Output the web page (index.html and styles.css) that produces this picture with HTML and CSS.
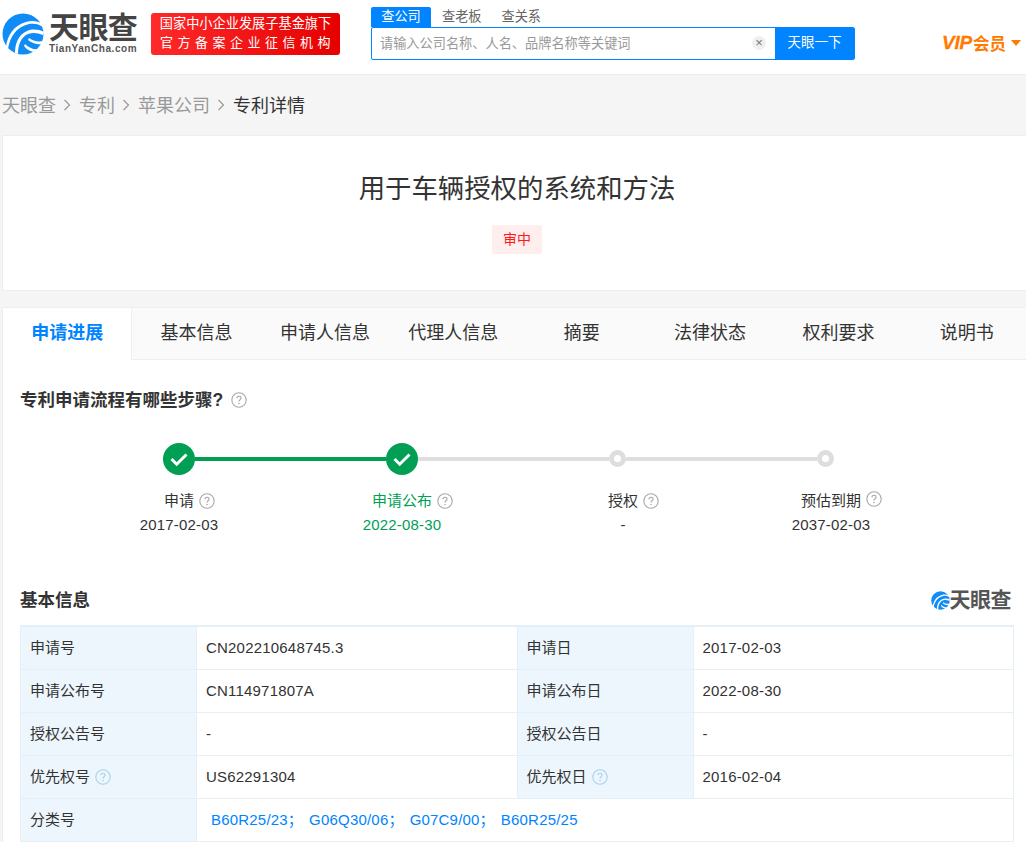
FILE: index.html
```html
<!DOCTYPE html>
<html lang="zh-CN">
<head>
<meta charset="utf-8">
<title>用于车辆授权的系统和方法</title>
<link rel="stylesheet" href="styles.css">
</head>
<body>
<svg class="defs" width="0" height="0" aria-hidden="true">
  <symbol id="tyc" viewBox="0 0 42 42">
    <circle cx="21" cy="21" r="20.5" fill="#0f8cf5"/>
    <path d="M6 36C8 24 14 14 27 11c5-1 10 0 14 3l1-2C37 8 30 7 24 9 12 12 5 23 4 34z" fill="#fff"/>
    <path d="M16 41c0-9 3-17 10-20 5-2 10-1 15 1l1-3c-6-3-12-3-17-1-9 4-12 13-12 22z" fill="#fff"/>
    <path d="M27 25c4 3 9 4 14 3l-1 3c-5 1-10-1-14-4z" fill="#fff"/>
    <path d="M23 31c4 4 9 6 14 5l-3 3c-5 0-9-2-12-6z" fill="#fff"/>
  </symbol>
  <symbol id="help" viewBox="0 0 16 16">
    <circle cx="8" cy="8" r="7.2" fill="none" stroke="currentColor" stroke-width="1.1"/>
    <path d="M5.9 6.3C5.9 5 6.9 4.2 8 4.2s2.1.8 2.1 1.9c0 1.6-2.1 1.7-2.1 3.4" fill="none" stroke="currentColor" stroke-width="1.1"/>
    <circle cx="8" cy="11.5" r=".8" fill="currentColor"/>
  </symbol>
  <symbol id="chev" viewBox="0 0 8 12">
    <path d="M1.5 1l5 5-5 5" fill="none" stroke="currentColor" stroke-width="1.2"/>
  </symbol>
  <symbol id="check" viewBox="0 0 32 32">
    <circle cx="16" cy="16" r="16" fill="#009f53"/>
    <path d="M8.5 16l5.2 5.2L23.5 11.5" fill="none" stroke="#fff" stroke-width="3"/>
  </symbol>
</svg>

<header class="topbar">
  <div class="brand">
    <svg class="brand-icon"><use href="#tyc"/></svg>
    <div class="brand-text">
      <div class="brand-name">天眼查</div>
      <div class="brand-url">TianYanCha.com</div>
    </div>
  </div>
  <div class="fund">
    <div class="fund-one">国家中小企业发展子基金旗下</div>
    <div class="fund-two">官方备案企业征信机构</div>
  </div>
  <div class="search">
    <div class="search-tabs">
      <span class="search-tab is-on">查公司</span>
      <span class="search-tab">查老板</span>
      <span class="search-tab">查关系</span>
    </div>
    <div class="search-box">
      <span class="placeholder">请输入公司名称、人名、品牌名称等关键词</span>
      <span class="clear">×</span>
      <span class="search-btn">天眼一下</span>
    </div>
  </div>
  <div class="vip"><span class="vip-v">VIP</span><span class="vip-c">会员</span><i class="caret"></i></div>
</header>

<nav class="crumbs">
  <a>天眼查</a><svg class="chev"><use href="#chev"/></svg>
  <a>专利</a><svg class="chev"><use href="#chev"/></svg>
  <a>苹果公司</a><svg class="chev"><use href="#chev"/></svg>
  <span class="crumb-now">专利详情</span>
</nav>

<section class="card title-card">
  <h1 class="title">用于车辆授权的系统和方法</h1>
  <span class="status">审中</span>
</section>

<section class="card main-card">
  <div class="tabs">
    <div class="tab is-on">申请进展</div>
    <div class="tab">基本信息</div>
    <div class="tab">申请人信息</div>
    <div class="tab">代理人信息</div>
    <div class="tab">摘要</div>
    <div class="tab">法律状态</div>
    <div class="tab">权利要求</div>
    <div class="tab">说明书</div>
  </div>
  <div class="content">
    <h2 class="flow-title">专利申请流程有哪些步骤?<svg class="help help-title"><use href="#help"/></svg></h2>
    <div class="track">
      <svg class="dot-done"><use href="#check"/></svg>
      <i class="line line-green"></i>
      <svg class="dot-done"><use href="#check"/></svg>
      <i class="line"></i>
      <i class="ring"></i>
      <i class="line"></i>
      <i class="ring"></i>
    </div>
    <div class="steps">
      <div class="step">
        <div class="step-label"><span class="step-name">申请<svg class="help help-step"><use href="#help"/></svg></span></div>
        <div class="step-date">2017-02-03</div>
      </div>
      <div class="step is-green">
        <div class="step-label"><span class="step-name">申请公布<svg class="help help-step"><use href="#help"/></svg></span></div>
        <div class="step-date">2022-08-30</div>
      </div>
      <div class="step">
        <div class="step-label"><span class="step-name">授权<svg class="help help-step"><use href="#help"/></svg></span></div>
        <div class="step-date">-</div>
      </div>
      <div class="step">
        <div class="step-label"><span class="step-name">预估到期<svg class="help help-step help-up"><use href="#help"/></svg></span></div>
        <div class="step-date">2037-02-03</div>
      </div>
    </div>
    <div class="info-head">
      <h2 class="info-title">基本信息</h2>
      <div class="mark"><svg class="mark-icon"><use href="#tyc"/></svg><span class="mark-name">天眼查</span></div>
    </div>
    <table class="info">
      <tr>
        <th>申请号</th><td>CN202210648745.3</td>
        <th>申请日</th><td>2017-02-03</td>
      </tr>
      <tr>
        <th>申请公布号</th><td>CN114971807A</td>
        <th>申请公布日</th><td>2022-08-30</td>
      </tr>
      <tr>
        <th>授权公告号</th><td>-</td>
        <th>授权公告日</th><td>-</td>
      </tr>
      <tr>
        <th>优先权号<svg class="help help-cell"><use href="#help"/></svg></th><td>US62291304</td>
        <th>优先权日<svg class="help help-cell"><use href="#help"/></svg></th><td>2016-02-04</td>
      </tr>
      <tr>
        <th>分类号</th>
        <td colspan="3" class="codes"><a>B60R25/23；</a><a>G06Q30/06；</a><a>G07C9/00；</a><a>B60R25/25</a></td>
      </tr>
    </table>
  </div>
</section>
</body>
</html>
```
FILE: styles.css
```css
* { box-sizing: border-box; }
html, body { margin: 0; padding: 0; height: 842px; overflow: hidden; }
body {
  width: 1026px;
  background: #f5f5f5;
  color: #333;
  font-family: "Liberation Sans", "Noto Sans CJK SC", sans-serif;
  font-size: 15px;
}
.defs { position: absolute; }

.topbar {
  height: 75px;
  background: #fff;
  border-bottom: 1px solid #ececec;
  display: flex;
  align-items: flex-start;
}
.brand { display: flex; margin: 13px 0 0 2px; width: 149px; }
.brand-icon { width: 42px; height: 42px; flex: none; }
.brand-text { margin-left: 5px; }
.brand-name { font-size: 30px; line-height: 28px; margin-top: 1px; font-weight: 700; color: #444; letter-spacing: -.6px; }
.brand-url { font-size: 10px; line-height: 12px; margin-top: 1px; font-weight: 700; color: #555; letter-spacing: .55px; white-space: nowrap; }
.fund {
  width: 189px; height: 42px; margin-top: 13px;
  border-radius: 3px;
  background: linear-gradient(90deg, #ff2a2a, #e60000);
  color: #fff; text-align: center;
}
.fund-one { font-size: 13.2px; line-height: 21px; white-space: nowrap; }
.fund-two { font-size: 13px; line-height: 18px; letter-spacing: 4.5px; margin-right: -4px; white-space: nowrap; }
.search { width: 484px; margin: 7px 0 0 31px; }
.search-tabs { display: flex; height: 20px; }
.search-tab { width: 59.5px; text-align: center; line-height: 19px; color: #666; font-size: 13.2px; }
.search-tab.is-on { width: 60px; background: #0084ff; color: #fff; border-radius: 2px 2px 0 0; margin-right: 1px; }
.search-box {
  height: 33px; border: 1px solid #0084ff; border-radius: 2px;
  display: flex; align-items: center; padding-left: 8px;
}
.placeholder { color: #999; flex: 1; font-size: 13.2px; margin-bottom: 3px; }
.clear {
  width: 14px; height: 14px; border-radius: 50%;
  background: #f0f0f0; color: #777;
  font-size: 13px; line-height: 14px; text-align: center;
  margin: 0 9px 1px 0;
}
.search-btn {
  width: 79px; height: 31px; line-height: 29px; text-align: center;
  background: #0084ff; color: #fff; font-size: 13.5px;
}
.vip { display: flex; align-items: center; margin: 32px 0 0 87px; color: #ff7a00; font-weight: 700; height: 22px; white-space: nowrap; }
.vip-v { font-size: 19px; font-style: italic; letter-spacing: -.2px; -webkit-text-stroke: .3px #ff7a00; }
.vip-c { font-size: 16.5px; margin-left: 1px; }
.caret { width: 0; height: 0; margin-left: 5px; border: 5px solid transparent; border-top: 6px solid #ff7a00; border-bottom: 0; }

.crumbs { height: 60px; display: flex; align-items: center; padding: 0 0 2px 2px; font-size: 18px; color: #999; }
.chev { width: 8px; height: 12px; margin: 2px 8px 0 7px; color: #999; }
.crumb-now { color: #333; }

.card { width: 1030px; margin-left: 2px; background: #fff; border: 1px solid #eee; }
.title-card { height: 156px; margin-bottom: 16px; text-align: center; padding-top: 36px; }
.title { margin: 0; font-size: 26.4px; line-height: 34px; font-weight: 400; color: #333; }
.status {
  display: inline-block; width: 50px; height: 29px; line-height: 29px; margin-top: 19px;
  background: #ffeeee; color: #ff1a1a; font-size: 14px; border-radius: 2px;
}

.tabs { display: flex; height: 52px; background: #fafafa; border-bottom: 1px solid #eee; }
.tab { flex: 1; text-align: center; line-height: 50px; font-size: 18px; color: #333; }
.tab.is-on { background: #fff; color: #0084ff; font-weight: 700; border-right: 1px solid #eee; height: 52px; }

.content { padding: 0 17px; }
.flow-title { margin: 27px 0 0; font-size: 17.5px; line-height: 26px; font-weight: 700; color: #333; display: flex; align-items: center; }
.help { width: 16px; height: 16px; color: #a8a8a8; flex: none; }
.help-title { margin-left: 8px; }
.track { display: flex; align-items: center; height: 32px; margin-top: 30px; padding-left: 143px; }
.dot-done { width: 32px; height: 32px; flex: none; }
.line { width: 191px; height: 4px; margin-bottom: 1px; background: #dedede; flex: none; }
.line-green { background: #009f53; }
.ring { width: 17px; height: 17px; margin-bottom: 1px; border: 5px solid #dedede; border-radius: 50%; background: #fff; flex: none; }
.steps { display: grid; grid-template-columns: 223px 221px 208px 120px; padding-left: 99px; margin-top: 14px; }
.step { width: 120px; text-align: center; color: #333; }
.step.is-green { color: #009f53; }
.step-label { height: 24px; line-height: 24px; }
.step-name { position: relative; display: inline-block; }
.help-step { position: absolute; left: 100%; top: 4px; margin-left: 5px; }
.help-up { top: 2px; }
.step-date { height: 24px; line-height: 24px; letter-spacing: .2px; }
.info-head { display: flex; justify-content: space-between; align-items: center; height: 28px; margin-top: 49px; }
.info-title { margin: 0; font-size: 17.5px; font-weight: 700; color: #333; line-height: 28px; }
.mark { display: flex; align-items: center; margin-right: 3px; }
.mark-icon { width: 19px; height: 19px; }
.mark-name { font-size: 21px; line-height: 24px; font-weight: 700; color: #555; letter-spacing: -.5px; }

.info {
  width: 994px; margin-top: 11px; border-collapse: collapse; table-layout: fixed;
  border-top: 2px solid #e4eff8;
}
.info th, .info td { height: 43px; border: 1px solid #e4eff8; padding: 0 9px; font-size: 15px; line-height: 20px; font-weight: 400; text-align: left; color: #333; letter-spacing: .2px; }
.info th { width: 176px; background: #edf6fc; letter-spacing: 0; }
.help-cell { color: #a6d2ee; vertical-align: -3px; margin-left: 5px; }
.codes a { color: #0084ff; margin: 0 1px 0 5px; }
```
